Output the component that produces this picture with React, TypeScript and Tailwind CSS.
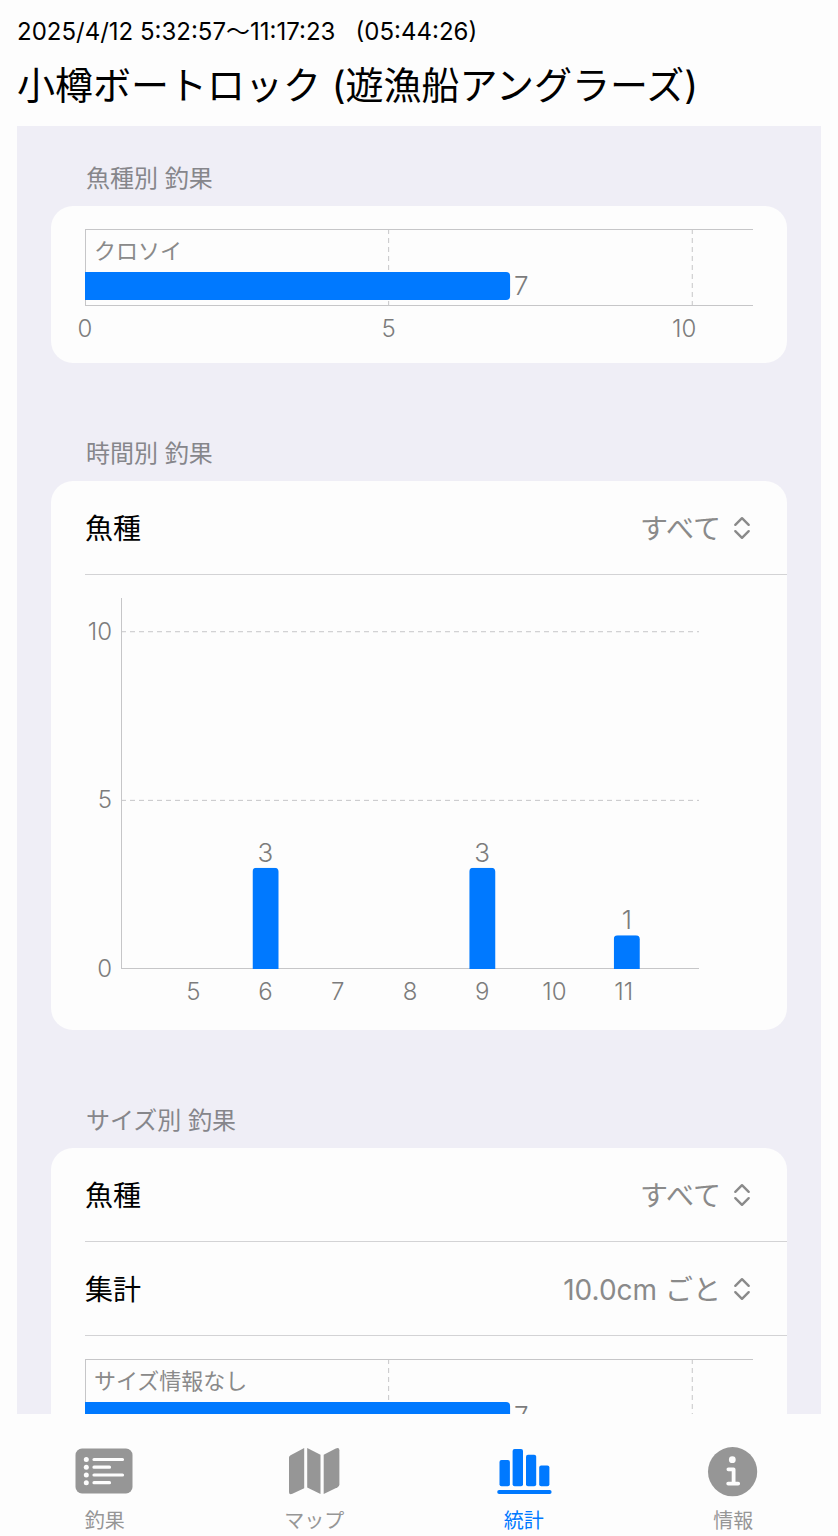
import { useState, type ReactNode } from "react"

const speciesCatches = [{ name: "クロソイ", count: 7 }]
const sizeCatches = [{ name: "サイズ情報なし", count: 7 }]
const hourlyCatches = [
  { hour: 5, count: 0 },
  { hour: 6, count: 3 },
  { hour: 7, count: 0 },
  { hour: 8, count: 0 },
  { hour: 9, count: 3 },
  { hour: 10, count: 0 },
  { hour: 11, count: 1 },
]

const CHART_MAX = 11
const BAR_ROW = 77
const PLOT_HEIGHT = 371

function Section({ title, children }: { title: string; children: ReactNode }) {
  return (
    <section className="mb-[75px]">
      <h2 className="mb-[11px] px-[35px] text-2xl leading-8 text-[#86868b]">{title}</h2>
      <div className="rounded-[22px] bg-[#fdfdfd]">{children}</div>
    </section>
  )
}

function PickerRow({ id, label, options }: { id: string; label: string; options: string[] }) {
  const [value, setValue] = useState(options[0])

  return (
    <div className="ml-[34px] flex h-[94px] items-center justify-between border-b border-[#d3d3d5] pr-[34px] text-[28px]">
      <label htmlFor={id} className="pt-0.5 text-black">
        {label}
      </label>
      <div className="relative flex items-center">
        <select
          id={id}
          value={value}
          onChange={(e) => setValue(e.target.value)}
          className="field-sizing-content appearance-none bg-transparent pt-0.5 pr-8 text-[#8a8a8a] outline-none"
        >
          {options.map((option) => (
            <option key={option}>{option}</option>
          ))}
        </select>
        <svg
          viewBox="0 0 22 24"
          className="pointer-events-none absolute right-0 h-6 w-[22px]"
          fill="none"
          stroke="#8a8a8a"
          strokeWidth="2.4"
          strokeLinecap="round"
          strokeLinejoin="round"
          aria-hidden="true"
        >
          <path d="M4.3 8.8 11 2.2 17.7 8.8M4.3 15.2 11 21.8 17.7 15.2" />
        </svg>
      </div>
    </div>
  )
}

function HorizontalChart({ data }: { data: { name: string; count: number }[] }) {
  const height = data.length * BAR_ROW
  const percent = (value: number) => `${(value / CHART_MAX) * 100}%`

  return (
    <div className="px-[34px] py-[23px]">
      <svg className="h-[111px] w-full overflow-visible" role="img">
        <g stroke="#c6c6c8">
          <line x1={percent(5)} x2={percent(5)} y1="0" y2={height} strokeDasharray="5 4" />
          <line x1={percent(10)} x2={percent(10)} y1="0" y2={height} strokeDasharray="5 4" />
          <line x1="0" x2="100%" y1="0.5" y2="0.5" />
          <line x1="0" x2="100%" y1={height - 0.5} y2={height - 0.5} />
          <line x1="0.5" x2="0.5" y1="0" y2={height} />
        </g>
        {data.map((item, i) => (
          <g key={item.name} transform={`translate(0 ${i * BAR_ROW})`}>
            <text x="9" y="30" className="fill-[#8a8a8a] text-[22px]">
              {item.name}
            </text>
            <rect y="43" width={percent(item.count)} height="28" rx="4" fill="#0079ff" />
            <rect y="43" width="8" height="28" fill="#0079ff" />
            <text x={percent(item.count)} y="66" dx="4" className="fill-[#7c7c7c] text-[26px] font-light">
              {item.count}
            </text>
          </g>
        ))}
        <g className="fill-[#7c7c7c] text-2xl font-light">
          <text x="0" y={height + 31} textAnchor="middle">0</text>
          <text x={percent(5)} y={height + 31} textAnchor="middle">5</text>
          <text x={percent(10)} y={height + 31} dx="4" textAnchor="end">10</text>
        </g>
      </svg>
    </div>
  )
}

function HourlyChart() {
  const y = (value: number) => PLOT_HEIGHT - (value / CHART_MAX) * PLOT_HEIGHT
  // the axis runs from 4h to 12h
  const x = (hour: number) => `${((hour - 4) / 8) * 100}%`

  return (
    <div className="py-[23px] pr-[88px] pl-[70px]">
      <svg className="h-[409px] w-full overflow-visible" role="img">
        <g stroke="#c6c6c8">
          <line x1="0" x2="100%" y1={y(10)} y2={y(10)} strokeDasharray="5 4" />
          <line x1="0" x2="100%" y1={y(5)} y2={y(5)} strokeDasharray="5 4" />
          <line x1="0.5" x2="0.5" y1="0" y2={PLOT_HEIGHT} />
          <line x1="0" x2="100%" y1={PLOT_HEIGHT - 0.5} y2={PLOT_HEIGHT - 0.5} />
        </g>
        <g className="fill-[#7c7c7c] text-2xl font-light">
          {[0, 5, 10].map((tick) => (
            <text key={tick} x="-9" y={y(tick) + 8} textAnchor="end">
              {tick}
            </text>
          ))}
          {hourlyCatches.map(({ hour }) => (
            <text key={hour} x={x(hour)} y={PLOT_HEIGHT + 31} dx={hour === 11 ? -3 : 0} textAnchor="middle">
              {hour}
            </text>
          ))}
        </g>
        {hourlyCatches
          .filter(({ count }) => count > 0)
          .map(({ hour, count }) => (
            <g key={hour}>
              {/* the nested svg clips the lower corners so only the top is rounded */}
              <g transform="translate(-13 0)">
                <svg x={x(hour)} y={y(count)} width="27" height={PLOT_HEIGHT - y(count)}>
                  <rect width="26" height={PLOT_HEIGHT - y(count) + 8} rx="4" fill="#0079ff" />
                </svg>
              </g>
              <text
                x={x(hour)}
                y={y(count) - 6}
                textAnchor="middle"
                className="fill-[#7c7c7c] text-[26px] font-light"
              >
                {count}
              </text>
            </g>
          ))}
      </svg>
    </div>
  )
}

function ListIcon() {
  return (
    <svg viewBox="0 0 60 50" className="h-[50px] w-[60px]" aria-hidden="true">
      <rect x="0.5" y="1.5" width="57" height="45" rx="6.5" fill="currentColor" />
      <g stroke="#fdfdfd" strokeWidth="3.2" strokeLinecap="round">
        <path d="M19 12.5h28.5M19 20.2h15.5M19 28h28.5M19 35.7h15.5" />
      </g>
      <g fill="#fdfdfd">
        <circle cx="11.3" cy="12.5" r="2.5" />
        <circle cx="11.3" cy="20.2" r="2.5" />
        <circle cx="11.3" cy="28" r="2.5" />
        <circle cx="11.3" cy="35.7" r="2.5" />
      </g>
    </svg>
  )
}

function MapIcon() {
  return (
    <svg viewBox="0 0 60 50" className="h-[50px] w-[60px]" fill="currentColor" aria-hidden="true">
      <path d="M20.2 1v40.3L8.4 46.8Q5 48 5 45.2V10.6Q5 9 6.6 8.2Z" />
      <path d="M23.2 1 36.5 7.8V47L23.2 40.6Z" />
      <path d="M39.7 7.8 51.8 1.4Q55.4 0 55.4 3.2V37.4Q55.4 39.2 53.6 40.2L39.7 47Z" />
    </svg>
  )
}

function StatsIcon() {
  return (
    <svg viewBox="0 0 60 50" className="h-[50px] w-[60px]" fill="currentColor" aria-hidden="true">
      <rect x="5.5" y="13" width="10.4" height="26.2" rx="2" />
      <rect x="18.6" y="2" width="10.4" height="37.2" rx="2" />
      <rect x="32" y="7.8" width="10.2" height="31.4" rx="2" />
      <rect x="45.2" y="18.4" width="10.2" height="20.8" rx="2" />
      <rect x="3.2" y="43" width="54.4" height="4" rx="2" />
    </svg>
  )
}

function InfoIcon() {
  return (
    <svg viewBox="0 0 60 50" className="h-[50px] w-[60px]" aria-hidden="true">
      <circle cx="29.6" cy="24.7" r="24.6" fill="currentColor" />
      <circle cx="29.3" cy="12.7" r="3.4" fill="#fdfdfd" />
      <path
        d="M25.4 22.3h5.2v14.3M25.2 36.6h10"
        fill="none"
        stroke="#fdfdfd"
        strokeWidth="3.8"
        strokeLinecap="round"
        strokeLinejoin="round"
      />
    </svg>
  )
}

const tabs = [
  { label: "釣果", icon: <ListIcon /> },
  { label: "マップ", icon: <MapIcon /> },
  { label: "統計", icon: <StatsIcon />, active: true },
  { label: "情報", icon: <InfoIcon /> },
]

export default function App() {
  return (
    <div className="flex h-screen flex-col bg-[#fdfdfd] font-['Inter','Noto_Sans_CJK_JP',sans-serif] text-black" lang="ja">
      <header className="px-[17px] pt-4 pb-[15px]">
        <p className="text-2xl leading-8 whitespace-pre">2025/4/12 5:32:57～11:17:23{"   "}(05:44:26)</p>
        <h1 className="mt-[11px] text-[38px] leading-[52px]">小樽ボートロック (遊漁船アングラーズ)</h1>
      </header>

      <main className="mx-[17px] min-h-0 flex-1 overflow-y-auto bg-[#efeef6] px-[34px] pt-[37px] [scrollbar-width:none]">
        <Section title="魚種別 釣果">
          <HorizontalChart data={speciesCatches} />
        </Section>

        <Section title="時間別 釣果">
          <PickerRow id="hourly-species" label="魚種" options={["すべて", "クロソイ"]} />
          <HourlyChart />
        </Section>

        <Section title="サイズ別 釣果">
          <PickerRow id="size-species" label="魚種" options={["すべて", "クロソイ"]} />
          <PickerRow id="size-step" label="集計" options={["10.0cm ごと", "5.0cm ごと"]} />
          <HorizontalChart data={sizeCatches} />
        </Section>
      </main>

      <nav className="grid grid-cols-4 pt-[33px]">
        {tabs.map((tab) => (
          <button
            key={tab.label}
            type="button"
            aria-current={tab.active ? "page" : undefined}
            className={`flex flex-col items-center gap-[9px] text-xl leading-[30px] ${tab.active ? "text-[#0079ff]" : "text-[#969696]"}`}
          >
            {tab.icon}
            {tab.label}
          </button>
        ))}
      </nav>
    </div>
  )
}
